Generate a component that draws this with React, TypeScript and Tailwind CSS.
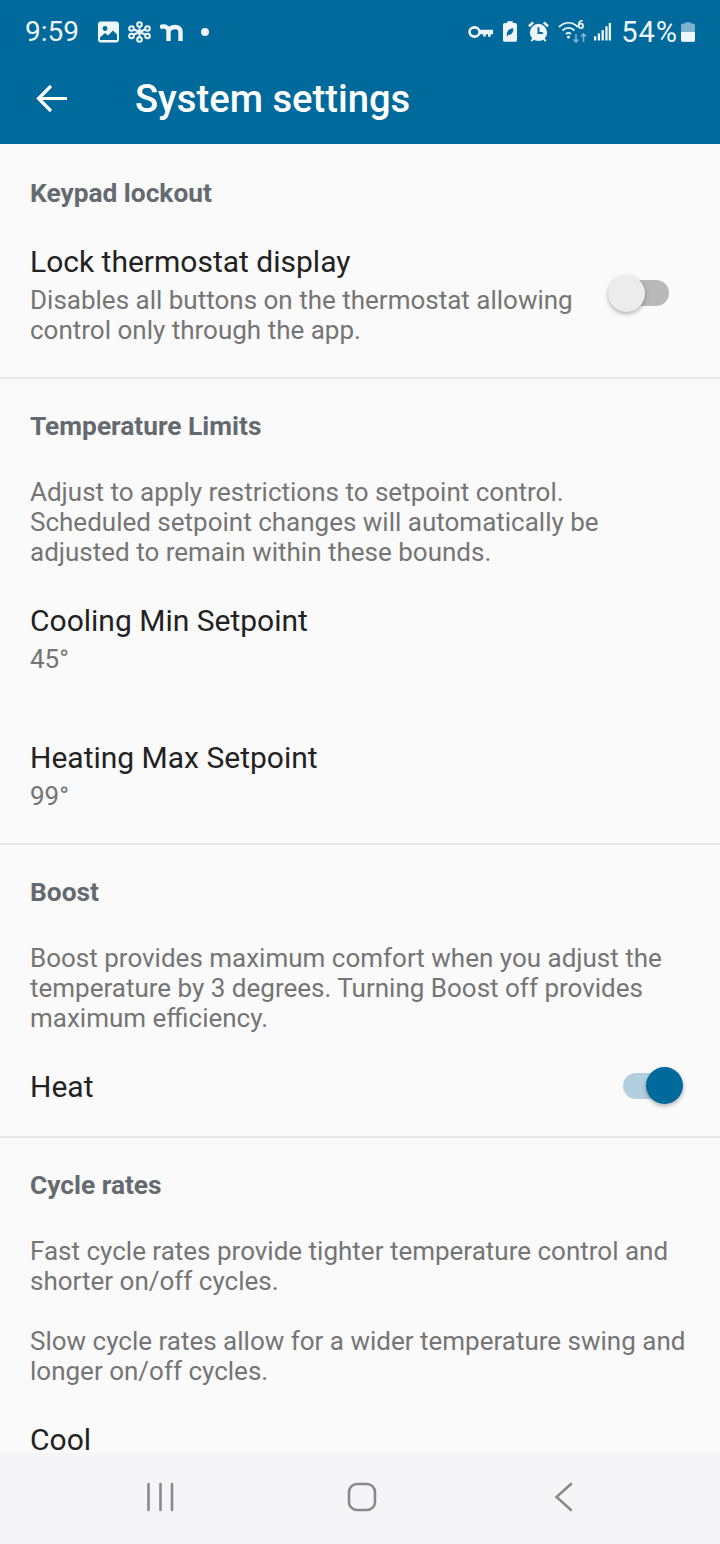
import React from "react";

const Heading = ({ children, className = "" }: { children: React.ReactNode; className?: string }) => (
  <div className={`text-[26.3px] leading-[30px] font-bold text-[#646a70] ${className}`}>{children}</div>
);

const Desc = ({ children, className = "" }: { children: React.ReactNode; className?: string }) => (
  <p className={`text-[26px] leading-[30px] text-[#757575] ${className}`}>{children}</p>
);

const Title = ({ children, className = "" }: { children: React.ReactNode; className?: string }) => (
  <div className={`text-[30px] leading-[36px] text-[#222222] ${className}`}>{children}</div>
);

const StatusLeft = () => (
  <div className="flex items-center">
    <span className="text-[28px] leading-[32px] text-[#eef6fa]">9:59</span>
    <svg className="ml-[19px]" width="21" height="22" viewBox="0 0 21 22">
      <rect x="0" y="0.5" width="21" height="21" rx="3" fill="#eef6fa" />
      <circle cx="7" cy="7.5" r="2.4" fill="#006a9c" />
      <path d="M2 19 L2 16.500 L7 12 L10 14.500 L15 9.500 L19 13.500 L19 19 Z" fill="#006a9c" />
    </svg>
    <svg className="ml-[9px]" width="23" height="22" viewBox="0 0 23 22" fill="none" stroke="#eef6fa" strokeWidth="2">
      <circle cx="11.500" cy="3.500" r="2.300" />
      <circle cx="11.500" cy="18.500" r="2.300" />
      <circle cx="3.500" cy="7.500" r="2.300" />
      <circle cx="19.500" cy="7.500" r="2.300" />
      <circle cx="3.500" cy="15" r="2.300" />
      <circle cx="19.500" cy="15" r="2.300" />
      <path d="M11.500 6v10M6 8.500l11 5M17 8.500l-11 5" />
    </svg>
    <svg className="ml-[9px]" width="23" height="20" viewBox="0 0 23 20" fill="none" stroke="#eef6fa" strokeWidth="4.400">
      <path d="M0 5.500 C4 3 7 5 8.500 7.500 L8.500 19 M8.500 9 C10 4.500 20.500 2.500 20.500 10 L20.500 19" />
    </svg>
    <span className="ml-[18px] w-[8px] h-[8px] rounded-full bg-[#eef6fa]" />
  </div>
);

const StatusRight = () => (
  <div className="flex items-center">
    <svg width="25" height="14" viewBox="0 0 25 14" fill="none">
      <ellipse cx="6.500" cy="7" rx="5" ry="4.600" stroke="#eef6fa" strokeWidth="2.600" />
      <path d="M11 4.800h14v4.400h-2.400v2.600h-2.600V9.200h-2.200v2.200h-2.600V9.200H11z" fill="#eef6fa" />
    </svg>
    <svg className="ml-[10px]" width="14" height="21" viewBox="0 0 15 22">
      <path d="M4.500 0h6v2h2.500a2 2 0 0 1 2 2v16a2 2 0 0 1-2 2H2a2 2 0 0 1-2-2V4a2 2 0 0 1 2-2h2.500z" fill="#eef6fa" />
      <path d="M4 14C4 10 7 8 11 7.500C11.500 11.500 9 15 5.500 14.500L4.500 16.500Z" fill="#006a9c" />
    </svg>
    <svg className="ml-[11px]" width="21" height="21" viewBox="0 0 22 22">
      <circle cx="11" cy="12" r="9" fill="#eef6fa" />
      <path d="M1 5.500L5.500 1.500M21 5.500L16.500 1.500" stroke="#eef6fa" strokeWidth="2.600" />
      <path d="M3.500 21l2.500-3M18.500 21L16 18" stroke="#eef6fa" strokeWidth="2" />
      <path d="M11 6.500V12.500H15.500" stroke="#006a9c" strokeWidth="2" fill="none" />
    </svg>
    <div className="ml-[9px] relative w-[29px] h-[24px]">
      <svg className="absolute left-0 top-0" width="29" height="24" viewBox="0 0 29 24" fill="none">
        <path d="M1 7C7 1.500 14 1.500 20 7" stroke="#eef6fa" strokeWidth="1.800" />
        <path d="M4.500 10.500C8 7 13 7 16.500 10.500" stroke="#eef6fa" strokeWidth="1.800" />
        <path d="M8 14C9.500 12.500 11.500 12.500 13 14" stroke="#eef6fa" strokeWidth="1.800" />
        <circle cx="10.500" cy="17" r="1.500" fill="#eef6fa" />
        <path d="M18 14v8M15.500 19.500l2.500 2.500 2.500-2.500" stroke="#7fb2cf" strokeWidth="1.600" />
        <path d="M25.500 22v-8M23 16.500l2.500-2.500 2.500 2.500" stroke="#7fb2cf" strokeWidth="1.600" />
      </svg>
      <span className="absolute left-[19px] top-[-2px] text-[12px] leading-[14px] font-bold text-[#eef6fa]">6</span>
    </div>
    <svg className="ml-[7px]" width="17" height="19" viewBox="0 0 18 20" fill="#eef6fa">
      <rect x="0" y="15" width="2.400" height="4.500" />
      <rect x="4" y="12" width="2.400" height="7.500" />
      <rect x="8" y="8.500" width="2.400" height="11" />
      <rect x="12" y="4.500" width="2.400" height="15" />
      <rect x="15.600" y="1" width="2.400" height="18.500" />
    </svg>
    <span className="ml-[10px] text-[29px] leading-[32px] tracking-[1px] text-[#eef6fa]">54%</span>
    <svg width="14" height="20" viewBox="0 0 15 21" className="ml-[3px]">
      <path d="M4.500 0h6v1.500h2.500a2 2 0 0 1 2 2V19a2 2 0 0 1-2 2H2a2 2 0 0 1-2-2V3.500a2 2 0 0 1 2-2h2.500z" fill="#7fb2cf" />
      <path d="M0 10.500h15V19a2 2 0 0 1-2 2H2a2 2 0 0 1-2-2z" fill="#eef6fa" />
    </svg>
  </div>
);

const Switch = ({ on }: { on: boolean }) =>
  on ? (
    <div className="flex items-center">
      <div className="w-[44px] h-[26px] rounded-full bg-[#b2cfdf]" />
      <div className="w-[37px] h-[37px] -ml-[21px] rounded-full bg-[#006a9c] shadow-[0_2px_4px_rgba(0,0,0,0.3)]" />
    </div>
  ) : (
    <div className="flex items-center">
      <div className="w-[37px] h-[37px] rounded-full bg-[#ececec] shadow-[0_2px_4px_rgba(0,0,0,0.3)] z-10" />
      <div className="w-[44px] h-[26px] -ml-[20px] rounded-full bg-[#b9b9b9]" />
    </div>
  );

const Divider = () => <div className="h-[2px] bg-[#e8e8e8]" />;

export default function App() {
  return (
    <div className="w-[720px] h-[1544px] flex flex-col overflow-hidden bg-[#fafafa] font-['Roboto',sans-serif]">
      <div className="h-[144px] shrink-0 bg-[#006a9c]">
        <div className="h-[60px] pl-[25px] pr-[25px] pt-[3px] flex items-center justify-between">
          <StatusLeft />
          <StatusRight />
        </div>
        <div className="h-[76px] flex items-center pl-[36px]">
          <svg width="31" height="29" viewBox="0 0 31 29" fill="none" stroke="#ffffff" strokeWidth="3.200">
            <path d="M31 14.500H3M15 2L2.500 14.500L15 27" />
          </svg>
          <h1 className="ml-[68px] mt-[2px] text-[38.2px] leading-[44px] font-medium text-white">System settings</h1>
        </div>
      </div>

      <div className="flex-1 min-h-0 overflow-hidden">
        <section className="h-[233px] px-[30px] pt-[34px]">
          <Heading>Keypad lockout</Heading>
          <div className="mt-[36px] flex items-center justify-between">
            <div className="w-[560px]">
              <Title>Lock thermostat display</Title>
              <Desc className="mt-[5px]">Disables all buttons on the thermostat allowing control only through the app.</Desc>
            </div>
            <div className="mr-[21px] mb-[3px]">
              <Switch on={false} />
            </div>
          </div>
        </section>
        <Divider />

        <section className="h-[464px] px-[30px] pt-[32px]">
          <Heading>Temperature Limits</Heading>
          <Desc className="mt-[36px]">
            Adjust to apply restrictions to setpoint control.
            <br />
            Scheduled setpoint changes will automatically be
            <br />
            adjusted to remain within these bounds.
          </Desc>
          <Title className="mt-[36px]">Cooling Min Setpoint</Title>
          <Desc className="mt-[5px]">45°</Desc>
          <Title className="mt-[66px]">Heating Max Setpoint</Title>
          <Desc className="mt-[5px]">99°</Desc>
        </section>
        <Divider />

        <section className="h-[291px] px-[30px] pt-[32px]">
          <Heading>Boost</Heading>
          <Desc className="mt-[36px]">
            Boost provides maximum comfort when you adjust the
            <br />
            temperature by 3 degrees. Turning Boost off provides
            <br />
            maximum efficiency.
          </Desc>
          <div className="mt-[34px] flex items-center justify-between">
            <Title>Heat</Title>
            <div className="mr-[7px] mb-[2px]">
              <Switch on />
            </div>
          </div>
        </section>
        <Divider />

        <section className="px-[30px] pt-[32px]">
          <Heading>Cycle rates</Heading>
          <Desc className="mt-[36px]">
            Fast cycle rates provide tighter temperature control and
            <br />
            shorter on/off cycles.
          </Desc>
          <Desc className="mt-[30px]">
            Slow cycle rates allow for a wider temperature swing and
            <br />
            longer on/off cycles.
          </Desc>
          <div className="mt-[40px] text-[30px] leading-[28px] text-[#222222]">Cool</div>
        </section>
      </div>

      <div className="h-[91px] shrink-0 bg-[#f5f5f7] flex items-center pl-[147px] pb-[3px]">
        <svg width="27" height="30" viewBox="0 0 27 30" fill="none" stroke="#8a8a8c" strokeWidth="2.600" strokeLinecap="round">
          <path d="M1.500 2v26M13.500 2v26M25 2v26" />
        </svg>
        <svg className="ml-[173px]" width="30" height="30" viewBox="0 0 30 30" fill="none" stroke="#8a8a8c" strokeWidth="2.600">
          <rect x="2" y="2" width="26" height="26" rx="8" />
        </svg>
        <svg className="ml-[177px]" width="19" height="30" viewBox="0 0 19 30" fill="none" stroke="#8a8a8c" strokeWidth="2.600" strokeLinecap="round">
          <path d="M17 2L2.500 15L17 28" />
        </svg>
      </div>
    </div>
  );
}
